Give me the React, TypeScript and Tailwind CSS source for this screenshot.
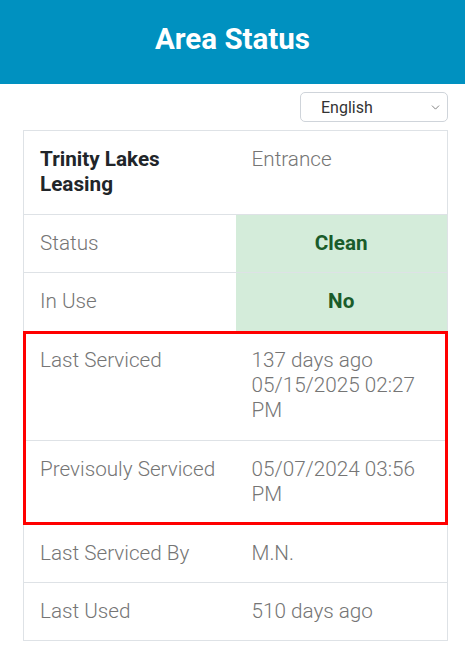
import { ChevronDown } from 'lucide-react';

type Row = {
  label: string;
  value: string[];
  tone?: 'ok';
};

const rows: Row[] = [
  { label: 'Status', value: ['Clean'], tone: 'ok' },
  { label: 'In Use', value: ['No'], tone: 'ok' },
];

const highlighted: Row[] = [
  { label: 'Last Serviced', value: ['137 days ago', '05/15/2025 02:27 PM'] },
  { label: 'Previsouly Serviced', value: ['05/07/2024 03:56 PM'] },
];

const trailing: Row[] = [
  { label: 'Last Serviced By', value: ['M.N.'] },
  { label: 'Last Used', value: ['510 days ago'] },
];

const InfoRow = ({ row, last }: { row: Row; last?: boolean }) => (
  <div className={`grid grid-cols-2 ${last ? '' : 'border-b border-[#dee2e6]'}`}>
    <div className="p-4 font-light text-[#757575]">{row.label}</div>
    {row.tone === 'ok' ? (
      <div className="p-4 text-center font-bold text-[#1a5c2a] bg-[#d4ecda]">{row.value[0]}</div>
    ) : (
      <div className="p-4 font-light text-[#757575]">
        {row.value.map((v) => (
          <div key={v}>{v}</div>
        ))}
      </div>
    )}
  </div>
);

export default function App() {
  return (
    <div className="min-h-[651px] bg-white font-['Roboto',sans-serif]">
      <header className="h-[84px] bg-[#0091c0] pt-[17px] text-center">
        <h1 className="text-[29.5px] font-bold leading-normal text-white">Area Status</h1>
      </header>

      <div className="pl-[23px] pr-[17px] pt-2">
        <div className="flex justify-end">
          <div className="relative h-[30px] w-[148px] rounded-[5px] border border-[#cfd4da] bg-white">
            <span className="absolute left-[20px] top-[3px] text-base text-[#333]">English</span>
            <ChevronDown size={13} strokeWidth={1.5} className="absolute right-[5px] top-[8px] text-[#666]" />
          </div>
        </div>

        <div className="mt-2 border border-[#dee2e6] text-[20.7px] leading-[25.4px]">
          <div className="grid grid-cols-2 border-b border-[#dee2e6]">
            <div className="p-4 font-bold text-[#212529]">Trinity Lakes Leasing</div>
            <div className="p-4 font-light text-[#757575]">Entrance</div>
          </div>

          {rows.map((r) => (
            <InfoRow key={r.label} row={r} />
          ))}

          <div className="relative border-b border-[#dee2e6]">
            {highlighted.map((r, i) => (
              <InfoRow key={r.label} row={r} last={i === highlighted.length - 1} />
            ))}
            <div className="pointer-events-none absolute -inset-px border-[3px] border-[#ff0000]" />
          </div>

          {trailing.map((r, i) => (
            <InfoRow key={r.label} row={r} last={i === trailing.length - 1} />
          ))}
        </div>
      </div>
    </div>
  );
}
